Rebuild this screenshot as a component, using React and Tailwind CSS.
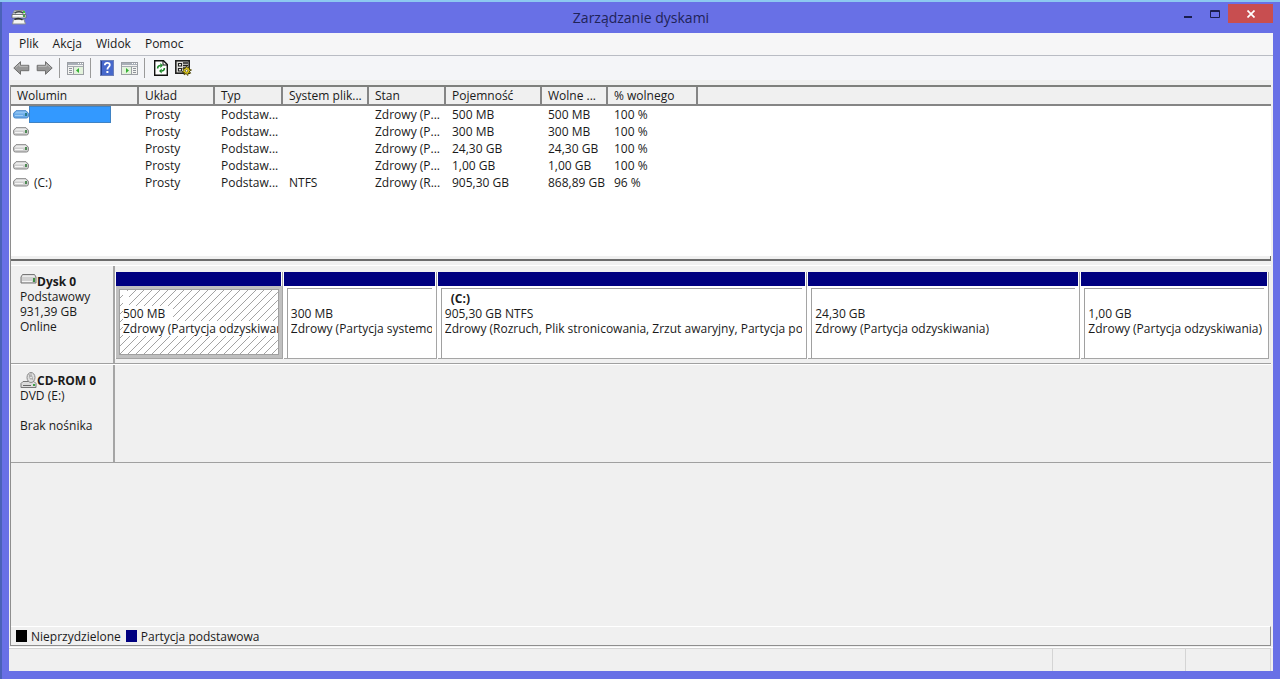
import React, { useState } from "react";

const MENUS = ["Plik", "Akcja", "Widok", "Pomoc"];

const COLUMNS = [
  { label: "Wolumin", width: "w-[128px]" },
  { label: "Układ", width: "w-[76px]" },
  { label: "Typ", width: "w-[68px]" },
  { label: "System plik...", width: "w-[86px]" },
  { label: "Stan", width: "w-[77px]" },
  { label: "Pojemność", width: "w-[96px]" },
  { label: "Wolne ...", width: "w-[66px]" },
  { label: "% wolnego", width: "w-[90px]" },
];

const VOLUMES = [
  { name: "", fs: "", status: "Zdrowy (P...", size: "500 MB", free: "500 MB", pct: "100 %" },
  { name: "", fs: "", status: "Zdrowy (P...", size: "300 MB", free: "300 MB", pct: "100 %" },
  { name: "", fs: "", status: "Zdrowy (P...", size: "24,30 GB", free: "24,30 GB", pct: "100 %" },
  { name: "", fs: "", status: "Zdrowy (P...", size: "1,00 GB", free: "1,00 GB", pct: "100 %" },
  { name: "(C:)", fs: "NTFS", status: "Zdrowy (R...", size: "905,30 GB", free: "868,89 GB", pct: "96 %" },
];

const PARTITIONS = [
  { name: "", size: "500 MB", status: "Zdrowy (Partycja odzyskiwan", grow: "flex-[167]" },
  { name: "", size: "300 MB", status: "Zdrowy (Partycja systemow", grow: "flex-[153]" },
  { name: "(C:)", size: "905,30 GB NTFS", status: "Zdrowy (Rozruch, Plik stronicowania, Zrzut awaryjny, Partycja podst", grow: "flex-[371]" },
  { name: "", size: "24,30 GB", status: "Zdrowy (Partycja odzyskiwania)", grow: "flex-[273]" },
  { name: "", size: "1,00 GB", status: "Zdrowy (Partycja odzyskiwania)", grow: "flex-[188]" },
];

function AppIcon() {
  return (
    <svg width="16" height="16" viewBox="0 0 16 16">
      <path d="M3.500 1.500h9.500l2 4H1.500z" fill="#e6e9e6" stroke="#8b9094" />
      <path d="M3.500 4q4.500-2.500 9 0" stroke="#3f4448" fill="none" strokeWidth="1.600" />
      <path d="M1 5.500h14v3.500H1z" fill="#e4e7e4" stroke="#62676a" strokeWidth=".8" />
      <path d="M2 6.500h9" stroke="#fff" />
      <path d="M2.500 10.500h10.500l1.500 4.500h-13z" fill="#f4f5f3" stroke="#8a8f92" />
      <path d="M3.500 10.500q4.500-2 8 .5" stroke="#2d3033" strokeWidth="1.500" fill="none" />
      <rect x="12" y="2" width="2" height="2" fill="#43c343" />
      <rect x="12" y="6" width="2" height="2" fill="#48a348" />
    </svg>
  );
}

function ArrowIcon({ flip }) {
  return (
    <svg width="17" height="16" viewBox="0 0 17 16" className={flip ? "-scale-x-100" : ""}>
      <path d="M.8 8 7.5 1.700v3.600h8.300v5.400H7.500v3.600z" fill="#969696" stroke="#6e6e6e" strokeLinejoin="round" />
      <path d="M2.600 7.600 6.600 4v2.300h8.200" fill="none" stroke="#bdbdbd" />
    </svg>
  );
}

function PaneIcon({ right }) {
  return (
    <svg width="17" height="16" viewBox="0 0 17 16">
      <rect x=".5" y="2.500" width="16" height="12" fill="#f3f3f1" stroke="#9b9fa4" />
      <rect x="1" y="3" width="15" height="2" fill="#a9afb8" />
      <path d="M11 3.500h1M13 3.500h1M15 3.500h1" stroke="#fff" />
      <path d="M1 6.500h15" stroke="#a6abb2" />
      {right ? (
        <>
          <rect x="1" y="7" width="9" height="7" fill="#e3f3dd" />
          <path d="M5 8v5l3-2.500z" fill="#35b135" />
          <path d="M10.500 7v7" stroke="#9b9fa4" />
          <path d="M12 8.500h3M12 10.500h3M12 12.500h3" stroke="#8d939a" />
        </>
      ) : (
        <>
          <path d="M2 8.500h3M2 10.500h3M2 12.500h3" stroke="#8d939a" />
          <path d="M6.500 7v7" stroke="#9b9fa4" />
          <rect x="7" y="7" width="9" height="7" fill="#e3f3dd" />
          <path d="M12 8v5l-3-2.500z" fill="#35b135" />
        </>
      )}
    </svg>
  );
}

function HelpIcon() {
  return (
    <svg width="14" height="16" viewBox="0 0 14 16">
      <rect x=".5" y=".5" width="13" height="15" fill="#4668cc" stroke="#6d7fb8" />
      <path d="M1.500 1v14" stroke="#27408f" />
      <path d="M4.800 5.300c0-3.300 5-3.300 5-.3 0 2-2.400 2-2.400 4.600" fill="none" stroke="#fff" strokeWidth="1.800" />
      <rect x="6.400" y="11" width="2" height="2" fill="#fff" />
    </svg>
  );
}

function RefreshIcon() {
  return (
    <svg width="14" height="16" viewBox="0 0 14 16">
      <path d="M.7.700h8.800l3.800 3.800v10.800H.7z" fill="#fff" stroke="#111" strokeWidth="1.400" />
      <path d="M9 1v4h4" fill="none" stroke="#111" />
      <path d="M3.600 8.500q0-3 3-3" fill="none" stroke="#1d8a2b" strokeWidth="1.500" />
      <path d="M6.300 3 9 5.500 6.300 8z" fill="#1d8a2b" />
      <path d="M10.400 8q0 3-3 3" fill="none" stroke="#1d8a2b" strokeWidth="1.500" />
      <path d="M7.700 8.500 5 11l2.700 2.500z" fill="#1d8a2b" />
    </svg>
  );
}

function SettingsIcon() {
  return (
    <svg width="17" height="16" viewBox="0 0 17 16">
      <rect x=".8" y=".8" width="13.400" height="12.400" fill="#e2e2de" stroke="#222" strokeWidth="1.600" />
      <path d="M3.500 3.500h3v2.500h-3zM3.500 8.500h3V11h-3z" fill="#fff" stroke="#222" strokeWidth="1.200" />
      <path d="M8 3h5M8 5.500h5M8 8h3" stroke="#222" strokeWidth="1.300" />
      <path d="m11.500 6 .9 2 2-1-.4 2.200 2.500.8-2.200 1.200 1.400 2-2.400-.3-.6 2.600-1.600-2-2 1.400.3-2.400-2.400-.5 2-1.500-1.200-2 2.200.2z" fill="#e5cf1d" stroke="#3a3508" strokeWidth=".8" />
      <circle cx="11.600" cy="10.800" r="1.200" fill="#fff" stroke="#3a3508" strokeWidth=".6" />
    </svg>
  );
}

function DriveIcon({ selected }) {
  return (
    <svg width="16" height="9" viewBox="0 0 16 9" className="shrink-0">
      <path d="M3 .7h10l2.400 2.600v3Q15.200 8 13.500 8h-11Q.6 8 .6 6.300v-3z" fill={selected ? "#6aaae8" : "#cfcfcf"} stroke={selected ? "#4a87c8" : "#858585"} />
      <path d="M3.300 1.500h9.400l1.500 2H1.800z" fill={selected ? "#8cc2f2" : "#ececec"} />
      <path d="M2 5.500h8" stroke={selected ? "#9ccbf4" : "#f6f6f6"} />
      <rect x="12" y="3" width="2" height="3" fill={selected ? "#2c7d86" : "#4f8a55"} />
    </svg>
  );
}

function DiskIcon() {
  return (
    <svg width="17" height="10" viewBox="0 0 17 10" className="shrink-0">
      <path d="M2.500.5h12L16 3v6H1V3z" fill="#d0d0d0" stroke="#777" />
      <path d="M2.800 1.500h11.400L15 3H2z" fill="#eaeaea" />
      <path d="M2 7.500h10" stroke="#f4f4f4" />
      <rect x="13" y="4" width="2" height="4" fill="#3d8f45" />
    </svg>
  );
}

function CdIcon() {
  return (
    <svg width="17" height="16" viewBox="0 0 17 16" className="shrink-0">
      <path d="M3 9.500h11l2 2v4H1v-4z" fill="#dcdcdc" stroke="#777" />
      <ellipse cx="11" cy="5.500" rx="4" ry="5" fill="#dedede" stroke="#8a8a8a" />
      <path d="M11 1v3M9 2l1 3M13 8l-1-2" stroke="#a8a8a8" />
      <ellipse cx="11" cy="5.500" rx="1.200" ry="1.600" fill="#fff" stroke="#8a8a8a" strokeWidth=".8" />
      <path d="M3 13.500h8" stroke="#666" />
      <rect x="13" y="12" width="2" height="2" fill="#3d9f45" />
    </svg>
  );
}

function Hatch() {
  return (
    <svg className="absolute inset-0 w-full h-full">
      <defs>
        <pattern id="hatch" width="8" height="8" patternUnits="userSpaceOnUse">
          <path d="M-1 9 9-1M-1 1 1-1M7 9 9 7" stroke="#a3a3a3" strokeWidth="1" />
        </pattern>
      </defs>
      <rect width="100%" height="100%" fill="url(#hatch)" />
    </svg>
  );
}

function ToolButton({ label, children }) {
  return (
    <button aria-label={label} className="w-[23px] h-6 flex items-center justify-center">
      {children}
    </button>
  );
}

function Separator() {
  return <div className="w-2 h-5 pl-[3px]"><div className="w-px h-full bg-[#9a9a9a]" /></div>;
}

function Partition({ part, selected, onSelect }) {
  return (
    <button onClick={onSelect} className={`${part.grow} min-w-0 flex flex-col text-left border-r border-r-[#a5a5a5] border-l border-l-white`}>
      <span className="block w-full h-[14px] bg-[#000080] border-r border-r-white" />
      <span className={`flex flex-1 w-full border-b border-[#a5a5a5] ${selected ? "bg-[#c0c0c0] p-[3px]" : "bg-white pt-[2px] pl-[3px] pr-1"}`}>
        <span className={`relative flex-1 min-w-0 flex flex-col overflow-hidden border-t border-l border-[#a0a0a0] bg-white pl-[3px] ${selected ? "border-r border-b pt-px" : "pt-[2px]"}`}>
          {selected && <Hatch />}
          <span className="relative h-[15px] pl-[6px] font-bold self-start bg-white">{part.name}</span>
          <span className={`relative self-start whitespace-nowrap ${selected ? "bg-white pr-2" : ""}`}>{part.size}</span>
          <span className={`relative self-start max-w-full overflow-hidden whitespace-nowrap ${selected ? "bg-white" : ""}`}>{part.status}</span>
        </span>
      </span>
    </button>
  );
}

export default function App() {
  const [selected, setSelected] = useState(0);

  return (
    <div className="min-h-screen flex flex-col bg-[#8cc8f0] pt-[2px] text-[12px] leading-[15px] text-[#1a1a1a] font-['Open_Sans','Noto_Sans',sans-serif]">
      <div className="flex-1 flex flex-col bg-[#6870e6] border-l-2 border-[#4a62b8] px-[7px] pb-2">
        {/* Title bar */}
        <header className="h-[31px] grid grid-cols-[1fr_auto_1fr]">
          <div className="pl-[2px] pt-[7px]"><AppIcon /></div>
          <h1 className="text-[14px] leading-[31px] text-[#1f2358]">Zarządzanie dyskami</h1>
          <div className="flex justify-end items-start pt-[2px] text-[#1a1d4d]">
            <button aria-label="Minimalizuj" className="w-7 h-[19px] flex items-center justify-center">
              <svg width="8" height="10" viewBox="0 0 8 10"><path d="M0 8h8" stroke="currentColor" strokeWidth="2" /></svg>
            </button>
            <button aria-label="Maksymalizuj" className="w-[26px] h-[19px] flex items-center justify-center">
              <svg width="10" height="8" viewBox="0 0 10 8"><path d="M.5.500h9v7h-9zM0 1.500h10" fill="none" stroke="currentColor" /></svg>
            </button>
            <button aria-label="Zamknij" className="w-[45px] h-[19px] flex items-center justify-center bg-[#c84e50]">
              <svg width="8" height="8" viewBox="0 0 8 8"><path d="m.5.500 7 7m0-7-7 7" stroke="#fff" strokeWidth="1.700" /></svg>
            </button>
          </div>
        </header>

        <main className="flex-1 flex flex-col bg-[#f0f0f0]">
          {/* Menu */}
          <nav className="h-[23px] flex items-start pt-[3px] bg-[#f6f6f7] border-b border-[#b9bcc4] pl-[2px]">
            {MENUS.map(m => (
              <button key={m} className="px-[7px] first:pl-2">{m}</button>
            ))}
          </nav>

          {/* Toolbar */}
          <div className="h-6 flex items-center bg-[#f4f5f8] pl-px">
            <ToolButton label="Wstecz"><ArrowIcon /></ToolButton>
            <ToolButton label="Dalej"><ArrowIcon flip /></ToolButton>
            <Separator />
            <ToolButton label="Drzewo konsoli"><PaneIcon /></ToolButton>
            <Separator />
            <ToolButton label="Pomoc"><HelpIcon /></ToolButton>
            <ToolButton label="Okienko akcji"><PaneIcon right /></ToolButton>
            <Separator />
            <ToolButton label="Odśwież"><RefreshIcon /></ToolButton>
            <ToolButton label="Ustawienia"><SettingsIcon /></ToolButton>
          </div>

          <div className="flex-1 flex flex-col pt-[5px] pl-px pr-[2px]">
            <div className="flex-1 flex flex-col border-l border-[#8e8e8e]">
              {/* Volume list */}
              <div className="h-[171px] bg-white border-t-2 border-t-[#7f807d]">
                <table className="w-full table-fixed border-separate border-spacing-0">
                  <thead>
                    <tr className="h-[19px] bg-[#f0f0f0]">
                      {COLUMNS.map(c => (
                        <th key={c.label} className={`${c.width} p-0 pl-[6px] text-left font-normal whitespace-nowrap border-b-2 border-r-2 border-[#858585]`}>{c.label}</th>
                      ))}
                      <th className="p-0 border-b-2 border-[#858585]" />
                    </tr>
                  </thead>
                  <tbody>
                    {VOLUMES.map((v, i) => (
                      <tr key={i} onClick={() => setSelected(i)} className="h-[17px] whitespace-nowrap">
                        <td className="p-0">
                          <div className="flex items-center pl-[2px]">
                            <DriveIcon selected={selected === i} />
                            <span className={`h-[17px] leading-[17px] pl-[5px] ${selected === i ? "w-[82px] bg-[#3399ff] border border-[#3f83c4] text-white" : ""}`}>{v.name}</span>
                          </div>
                        </td>
                        <td className="p-0 pl-[6px]">Prosty</td>
                        <td className="p-0 pl-[6px]">Podstaw...</td>
                        <td className="p-0 pl-[6px]">{v.fs}</td>
                        <td className="p-0 pl-[6px]">{v.status}</td>
                        <td className="p-0 pl-[6px]">{v.size}</td>
                        <td className="p-0 pl-[6px]">{v.free}</td>
                        <td className="p-0 pl-[6px]">{v.pct}</td>
                        <td className="p-0" />
                      </tr>
                    ))}
                  </tbody>
                </table>
              </div>
              <div className="h-[5px] border-b-2 border-b-[#6c6c6c] border-r border-r-[#6c6c6c]" />

              {/* Disks */}
              <section className="mt-1 h-[99px] flex border-t border-t-white border-b border-b-[#a0a0a0]">
                <div className="w-[104px] shrink-0 pl-[9px] pt-2 border-r-2 border-[#a5a5a5]">
                  <div className="flex items-start font-bold"><DiskIcon />Dysk 0</div>
                  <p>Podstawowy</p>
                  <p>931,39 GB</p>
                  <p>Online</p>
                </div>
                <div className="flex-1 min-w-0 flex pt-[6px] pb-1 pr-[2px]">
                  {PARTITIONS.map((p, i) => (
                    <Partition key={i} part={p} selected={selected === i} onSelect={() => setSelected(i)} />
                  ))}
                </div>
              </section>
              <section className="h-[99px] flex border-t border-t-white border-b border-b-[#a0a0a0]">
                <div className="w-[104px] shrink-0 pl-[9px] pt-2 border-r-2 border-[#a5a5a5]">
                  <div className="h-[15px] flex items-end font-bold whitespace-nowrap"><CdIcon />CD-ROM 0</div>
                  <p>DVD (E:)</p>
                  <p className="mt-[15px]">Brak nośnika</p>
                </div>
              </section>

              {/* Legend */}
              <footer className="mt-auto h-5 flex items-center border-t border-t-white border-b border-b-[#8e8e8e] border-r border-r-[#8e8e8e] pl-[5px]">
                <span className="w-[11px] h-3 bg-black mr-1" />
                Nieprzydzielone
                <span className="w-[11px] h-3 bg-[#000080] ml-[5px] mr-1" />
                Partycja podstawowa
              </footer>
            </div>
          </div>

          {/* Status bar */}
          <div className="h-6 mt-px flex justify-end border-t border-t-white pr-[2px]">
            <div className="flex-1 border-t border-r border-[#d4d4d4]" />
            <div className="w-[133px] border-t border-r border-[#d4d4d4]" />
            <div className="w-[85px] border-t border-r border-[#d4d4d4]" />
          </div>
        </main>
      </div>
    </div>
  );
}
